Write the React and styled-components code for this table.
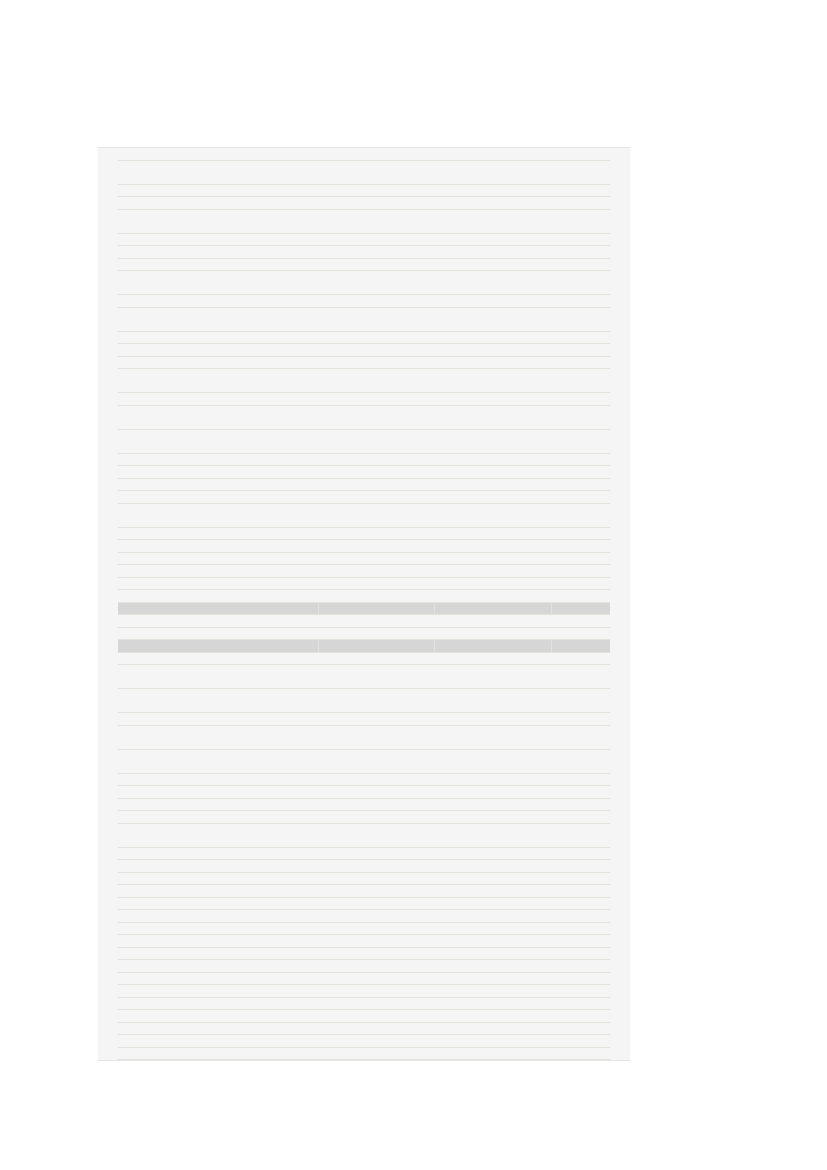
import React from "react";
import styled, { createGlobalStyle } from "styled-components";

const Global = createGlobalStyle`
  html, body { margin: 0; padding: 0; background: #ffffff; }
  body { font-family: "Liberation Sans", Arial, sans-serif; }
`;

const Page = styled.div`
  padding: 147px 0 0 98px;
  width: 827px;
  box-sizing: border-box;
`;

const Panel = styled.section`
  width: 532px;
  background: #f5f5f5;
  border-top: 1px solid #e7e7e7;
  border-bottom: 1px solid #e4e4e4;
  padding: 0 20px;
  box-sizing: border-box;
`;

const Table = styled.div`
  display: flex;
  flex-direction: column;
  width: 492px;
`;

const Row = styled.div`
  display: grid;
  grid-template-columns: 200px 116px 117px 59px;
  height: ${(p) => (p.$units === 2 ? "24px" : "12.5px")};
  box-sizing: border-box;
  border-bottom: 1px solid #e2e3dc;
  background: ${(p) => (p.$shaded ? "#d6d6d6" : "transparent")};
`;

const Cell = styled.div`
  box-sizing: border-box;
  font-size: 9px;
  line-height: 11px;
  color: transparent;
  border-left: ${(p) => (p.$first ? "none" : p.$shaded ? "1px solid #e1e1e1" : "none")};
`;

const layout =
  "1211211121211121221111211111" + "1G11G1" + "2212211112" + "11111111111111111";

const rows = layout.split("").map((c, i) => ({
  id: i,
  units: c === "2" ? 2 : 1,
  shaded: c === "G",
}));

export default function App() {
  return (
    <>
      <Global />
      <Page>
        <Panel>
          <Table>
            {rows.map((r) => (
              <Row key={r.id} $units={r.units} $shaded={r.shaded}>
                {[0, 1, 2, 3].map((c) => (
                  <Cell key={c} $first={c === 0} $shaded={r.shaded} />
                ))}
              </Row>
            ))}
          </Table>
        </Panel>
      </Page>
    </>
  );
}
